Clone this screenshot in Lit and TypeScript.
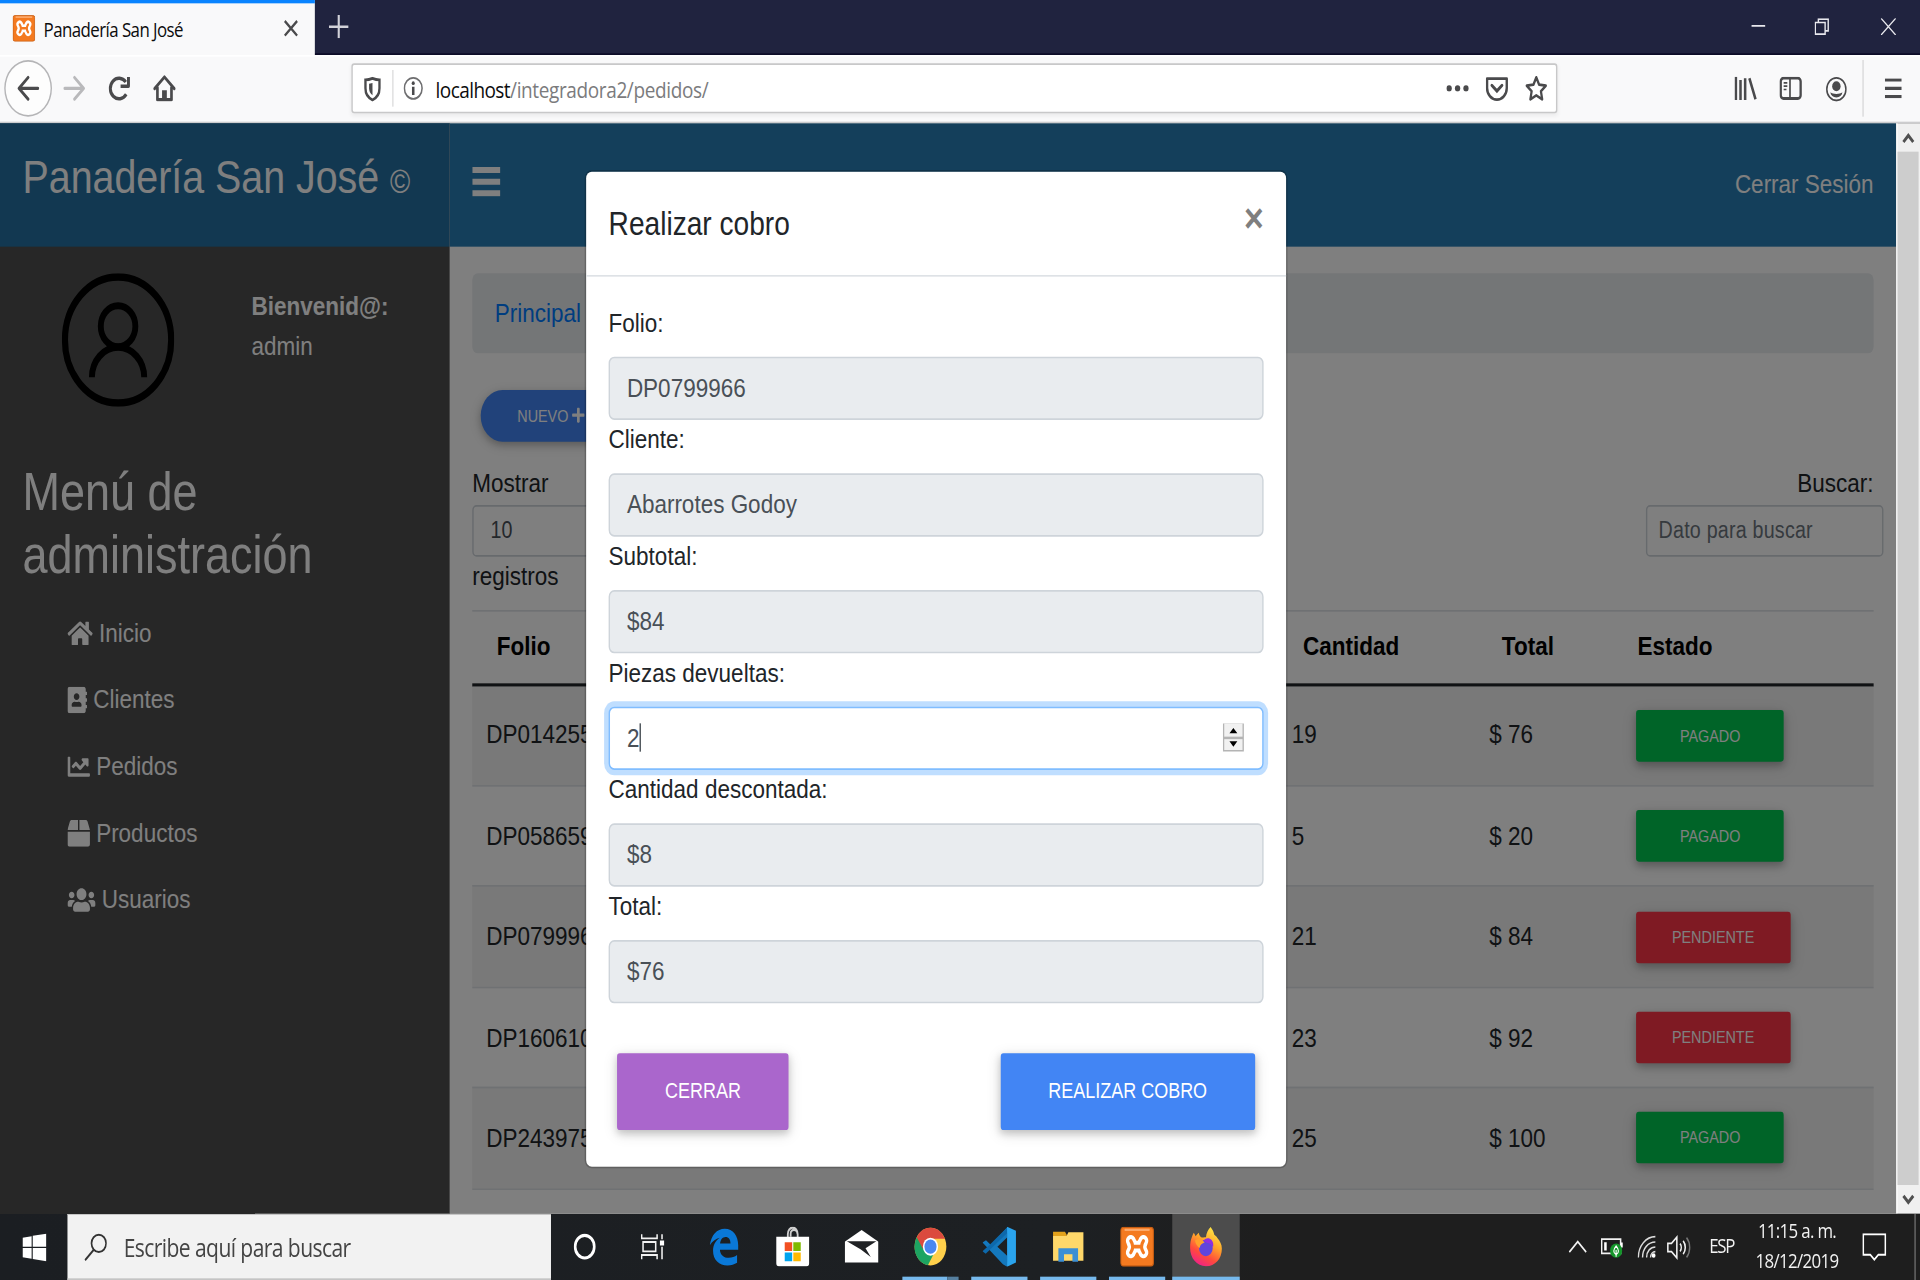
import { LitElement, html, css, svg, nothing } from "lit";
import { customElement, property } from "lit/decorators.js";

const xamppBone = "M7.500 8.500Q10.200 12 7.500 15.500M16.500 8.500Q13.800 12 16.500 15.500M9 12h6";
const xamppMark = svg`
  <rect x=".4" y=".4" width="23.2" height="23.2" rx="2" fill="#f47a20" stroke="#c65d13" stroke-width=".8"/>
  <rect x="3" y="1.2" width="18" height="1.4" rx=".6" fill="#fba869"/>
  <path d=${xamppBone} fill="none" stroke="#fff" stroke-width="7" stroke-linecap="round"/>
  <path d=${xamppBone} fill="none" stroke="#f47a20" stroke-width="2.200" stroke-linecap="round"/>`;

/* Solid glyphs of the site: viewBox width (height is 512) and outline. */
const SOLID: Record<string, [number, string]> = {
  home: [576, "M280.37 148.26L96 300.11V464a16 16 0 0 0 16 16l112.06-.29a16 16 0 0 0 15.92-16V368a16 16 0 0 1 16-16h64a16 16 0 0 1 16 16v95.64a16 16 0 0 0 16 16.05L464 480a16 16 0 0 0 16-16V300L295.67 148.26a12.19 12.19 0 0 0-15.3 0zM571.6 251.47L488 182.56V44.05a12 12 0 0 0-12-12h-56a12 12 0 0 0-12 12v72.61L318.47 43a48 48 0 0 0-61 0L4.34 251.47a12 12 0 0 0-1.6 16.9l25.5 31A12 12 0 0 0 45.15 301l235.22-193.74a12.19 12.19 0 0 1 15.3 0L530.9 301a12 12 0 0 0 16.9-1.6l25.5-31a12 12 0 0 0-1.7-16.93z"],
  book: [448, "M436 160c6.6 0 12-5.4 12-12v-40c0-6.6-5.4-12-12-12h-20V48c0-26.5-21.5-48-48-48H48C21.5 0 0 21.5 0 48v416c0 26.5 21.5 48 48 48h320c26.5 0 48-21.5 48-48v-48h20c6.6 0 12-5.4 12-12v-40c0-6.6-5.4-12-12-12h-20v-64h20c6.6 0 12-5.4 12-12v-40c0-6.6-5.4-12-12-12h-20v-64h20zm-228-32c35.3 0 64 28.7 64 64s-28.7 64-64 64-64-28.7-64-64 28.7-64 64-64zm112 236.8c0 10.6-10 19.2-22.4 19.2H118.4C106 384 96 375.4 96 364.8v-19.2c0-31.8 30.1-57.6 67.2-57.6h5c12.3 5.1 25.7 8 39.8 8s27.6-2.9 39.8-8h5c37.1 0 67.2 25.8 67.2 57.6v19.2z"],
  chart: [512, "M496 384H64V80c0-8.84-7.16-16-16-16H16C7.16 64 0 71.16 0 80v336c0 17.67 14.33 32 32 32h464c8.84 0 16-7.16 16-16v-32c0-8.84-7.16-16-16-16zM464 96H345.94c-21.38 0-32.09 25.85-16.97 40.97l32.4 32.4L288 242.75l-73.37-73.37c-12.5-12.5-32.76-12.5-45.25 0l-68.69 68.69c-6.25 6.25-6.25 16.38 0 22.63l22.62 22.62c6.25 6.25 16.38 6.25 22.63 0L192 237.25l73.37 73.37c12.5 12.5 32.76 12.5 45.25 0l96-96 32.4 32.4c15.12 15.12 40.97 4.41 40.97-16.97V112c.01-8.84-7.15-16-15.99-16z"],
  box: [512, "M509.5 184.6L458.9 32.8C452.4 13.2 434.1 0 413.4 0H272v192h238.700c-.4-2.500-.4-5-1.200-7.400zM240 0H98.600c-20.700 0-39 13.200-45.500 32.800L2.500 184.600c-.8 2.400-.8 4.900-1.200 7.400H240V0zM0 224v240c0 26.500 21.500 48 48 48h416c26.500 0 48-21.500 48-48V224H0z"],
  users: [640, "M96 224c35.3 0 64-28.7 64-64s-28.7-64-64-64-64 28.7-64 64 28.7 64 64 64zm448 0c35.3 0 64-28.7 64-64s-28.7-64-64-64-64 28.7-64 64 28.7 64 64 64zm32 32h-64c-17.6 0-33.5 7.1-45.1 18.6 40.3 22.1 68.9 62 75.1 109.4h66c17.7 0 32-14.3 32-32v-32c0-35.3-28.7-64-64-64zm-256 0c61.9 0 112-50.1 112-112S381.9 32 320 32 208 82.1 208 144s50.1 112 112 112zm76.8 32h-8.3c-20.8 10-43.9 16-68.5 16s-47.6-6-68.5-16h-8.3C179.6 288 128 339.6 128 403.2V432c0 26.5 21.5 48 48 48h288c26.5 0 48-21.5 48-48v-28.8c0-63.6-51.6-115.2-115.2-115.2zm-223.7-13.4C161.500 263.100 145.600 256 128 256H64c-35.300 0-64 28.700-64 64v32c0 17.700 14.300 32 32 32h65.900c6.300-47.400 34.900-87.300 75.200-109.400z"],
  plus: [448, "M416 208H272V64c0-17.67-14.33-32-32-32h-32c-17.67 0-32 14.33-32 32v144H32c-17.67 0-32 14.33-32 32v32c0 17.67 14.33 32 32 32h144v144c0 17.67 14.33 32 32 32h32c17.67 0 32-14.33 32-32V304h144c17.67 0 32-14.33 32-32v-32c0-17.670-14.330-32-32-32z"],
};

const solid = (name: string, size = 16) => {
  const [w, d] = SOLID[name];
  return html`<svg width=${(size * w) / 512} height=${size} viewBox="0 0 ${w} 512"><path fill="currentColor" d=${d}></path></svg>`;
};

const icon = (w: number, h: number, body: unknown, cls = "") =>
  html`<svg class=${cls} width=${w} height=${h} viewBox="0 0 ${w} ${h}" fill="none">${body}</svg>`;

/* ---------- Browser chrome ---------- */
@customElement("browser-chrome")
class BrowserChrome extends LitElement {
  static styles = css`
    :host { display: block; height: 74px; font-family: "Open Sans", "Noto Sans", sans-serif; }
    svg { display: block; flex: none; }
    .tabs { display: flex; height: 33px; background: #20233f; box-shadow: inset 0 -1px #0c0c28; }
    .tab { width: 224px; box-sizing: border-box; border-top: 2px solid #0a84ff; background: #f9f9fa; display: flex; align-items: center; padding: 0 12px 1px 9px; }
    .name { font-size: 12px; letter-spacing: -.4px; color: #0c0c0d; margin-left: 6px; flex: 1; white-space: nowrap; }
    .plus { margin: 9px 0 0 10px; }
    .win { margin-left: auto; display: flex; gap: 35.500px; padding: 11px 17.500px 0 0; }
    .nav { height: 41px; box-sizing: border-box; background: #f9f9fa; border-bottom: 1px solid #ccccce; display: flex; align-items: center; padding: 0 13px 1px 3px; border-top: 1px solid #fff; }
    .back { width: 34px; height: 34px; box-sizing: border-box; border: 1px solid #b5b5b7; border-radius: 50%; background: #fdfdfd; display: grid; place-items: center; }
    .url { width: 860px; height: 30px; box-sizing: border-box; border: 1px solid #c8c8c9; border-radius: 2px; background: #fff; margin-left: 125px; display: flex; align-items: center; padding: 0 6px 0 8px; box-shadow: 0 1px 3px rgba(0,0,0,.06); }
    .sep { width: 1px; height: 22px; background: #dededf; margin: 0 7px 0 8px; }
    .addr { margin-left: 9px; font-size: 13.500px; letter-spacing: -.26px; color: #7b7b7d; flex: 1; padding-top: 1px; }
    .host { color: #0c0c0d; letter-spacing: -.4px; }
    .fwd { margin-left: 8px; } .rel { margin-left: 16.500px; } .hom { margin-left: 15.500px; }
    .gap { margin-left: 12px; }
    .lib { margin-left: 126px; } .side { margin-left: 16px; } .acc { margin-left: 16.500px; }
    .bar { width: 1px; height: 34px; background: #dadadb; margin: 0 15px 0 11.500px; }
  `;
  render() {
    const k = "#4a4a4c";
    return html`
      <div class="tabs">
        <div class="tab">
          <svg width="16" height="16" viewBox="0 0 24 24">${xamppMark}</svg>
          <span class="name">Panadería San José</span>
          ${icon(10, 10, svg`<path d="M.6.6l8.800 8.800M9.400.6L.6 9.400" stroke="#4a4a4c" stroke-width="1.500"/>`)}
        </div>
        ${icon(14, 14, svg`<path d="M7 0v14M0 7h14" stroke="#d2d2d9" stroke-width="1.500"/>`, "plus")}
        <div class="win">
          ${icon(10, 10, svg`<path d="M0 4.500h10" stroke="#e8e8ee" stroke-width="1.100"/>`)}
          ${icon(11, 10, svg`<path d="M.5 2.500h7v7h-7zM2.700 2.500v-2h7v7H7.500" stroke="#e8e8ee"/>`)}
          ${icon(11, 10, svg`<path d="M.3 0l10.400 10M10.700 0L.3 10" stroke="#e8e8ee" stroke-width=".9"/>`)}
        </div>
      </div>
      <div class="nav">
        <div class="back">${icon(16, 16, svg`<path d="M15 8H1.800M8 1.500L1.500 8 8 14.500" stroke=${k} stroke-width="1.900" stroke-linecap="round" stroke-linejoin="round"/>`)}</div>
        ${icon(16, 16, svg`<path d="M1 8h13.200M8 1.500L14.500 8 8 14.500" stroke="#b9b9bb" stroke-width="1.900" stroke-linecap="round" stroke-linejoin="round"/>`, "fwd")}
        ${icon(16, 16, svg`<path d="M12.800 11.600A6.200 6.200 0 1 1 12.500 4.200M14.400 1.200v5.600H8.800" stroke=${k} stroke-width="2.100" stroke-linejoin="round"/>`, "rel")}
        ${icon(16, 16, svg`<path d="M1 8.200L8 1.200l7 7M3 7.500v7.300h10V7.500" stroke=${k} stroke-width="1.900" stroke-linejoin="round" stroke-linecap="round"/><path d="M6.300 14.500V9.200h3.400v5.300" fill=${k}/>`, "hom")}
        <div class="url">
          ${icon(12, 15, svg`<path d="M6 1C4 1.700 2.600 1.900 1 1.900V7c0 4 2.300 5.900 5 7 2.700-1.100 5-3 5-7V1.900C9.400 1.900 8 1.700 6 1z" stroke=${k} stroke-width="1.700"/><path d="M6 3.800v7.400C4.300 10.200 3.600 8.800 3.600 7V4.300z" fill=${k}/>`)}
          <div class="sep"></div>
          ${icon(14, 14, svg`<circle cx="7" cy="7" r="6.300" stroke="#6e6e70" stroke-width="1.100"/><circle cx="7" cy="3.900" r="1.100" fill=${k}/><path d="M7 6v5" stroke=${k} stroke-width="1.800"/>`)}
          <span class="addr"><span class="host">localhost</span>/integradora2/pedidos/</span>
          ${icon(16, 4, svg`<circle cx="2" cy="2" r="1.900" fill=${k}/><circle cx="8" cy="2" r="1.900" fill=${k}/><circle cx="14" cy="2" r="1.900" fill=${k}/>`)}
          ${icon(16, 15, svg`<path d="M1 1.200h14v5.600a7 7 0 0 1-14 0z" stroke=${k} stroke-width="1.700" stroke-linejoin="round"/><path d="M4.400 5.200L8 8.600l3.600-3.400" stroke=${k} stroke-width="1.900" stroke-linecap="round"/>`, "gap")}
          ${icon(16, 16, svg`<path d="M8 1.400l2 4.400 4.800.6-3.500 3.300.9 4.900L8 12.200l-4.200 2.400.9-4.900L1.200 6.400 6 5.800z" stroke=${k} stroke-width="1.600" stroke-linejoin="round"/>`, "gap")}
        </div>
        ${icon(16, 14, svg`<path d="M1 0v14M4.300 2v12M7.600 1v13M10.600 1l4.400 12.600" stroke=${k} stroke-width="1.800"/>`, "lib")}
        ${icon(16, 14, svg`<rect x=".9" y=".9" width="14.200" height="12.200" rx="2" stroke=${k} stroke-width="1.700"/><path d="M7.500 1v12" stroke=${k} stroke-width="1.200"/><path d="M3 3.700h2.600M3 5.700h2.600M3 7.700h2" stroke=${k} stroke-width="1"/>`, "side")}
        ${icon(15, 15, svg`<circle cx="7.500" cy="7.500" r="6.800" stroke=${k} stroke-width="1.100"/><circle cx="7.500" cy="5.700" r="3" fill=${k}/><path d="M3.200 9.400c1 .8 2.600 1 4.300 1s3.300-.2 4.300-1c-.3 2-2 3.100-4.300 3.100s-4-1.100-4.300-3.100z" fill=${k}/>`, "acc")}
        <div class="bar"></div>
        ${icon(12, 12, svg`<path d="M0 1h12M0 6h12M0 11h12" stroke=${k} stroke-width="1.900"/>`)}
      </div>`;
  }
}

/* ---------- Side menu ---------- */
@customElement("side-menu")
class SideMenu extends LitElement {
  static styles = css`
    :host { display: block; width: 320px; flex: none; background: #4e4e4e; color: #fff; }
    .brand { height: 74px; background: #2470a2; box-sizing: border-box; padding: 11.500px 16px 0; font-size: 28px; line-height: 1.500; white-space: nowrap; }
    .copy { font-size: 19.500px; }
    .user { display: flex; padding: 16px 0 0 44px; height: 111.500px; }
    .who { margin-left: 55px; padding-top: 7.900px; line-height: 24px; }
    .title { font-size: 32px; line-height: 38.400px; font-weight: 400; margin: 0 16px 7.500px; }
    .list { list-style: none; margin: 0; padding: 0 0 0 48px; }
    .item { height: 40px; display: flex; align-items: center; gap: 4.400px; }
    svg { display: block; }
  `;
  render() {
    const items = [["home", "Inicio"], ["book", "Clientes"], ["chart", "Pedidos"], ["box", "Productos"], ["users", "Usuarios"]];
    return html`
      <div class="brand">Panadería San José <span class="copy">©</span></div>
      <div class="user">
        ${icon(80, 80, svg`<circle cx="40" cy="40" r="37.800" stroke="#000" stroke-width="4.400"/><circle cx="40" cy="31.700" r="12.300" stroke="#000" stroke-width="4.200"/><path d="M21.400 62.400A18.600 18 0 0 1 58.600 62.400" stroke="#000" stroke-width="4.200"/>`)}
        <div class="who"><b>Bienvenid@:</b><br>admin</div>
      </div>
      <h2 class="title">Menú de administración</h2>
      <ul class="list">${items.map(([i, t]) => html`<li class="item">${solid(i)}<span>${t}</span></li>`)}</ul>`;
  }
}

/* ---------- Orders page ---------- */
const ORDERS = [
  ["DP014255", "19", "$ 76", true],
  ["DP058659", "5", "$ 20", true],
  ["DP079996", "21", "$ 84", false],
  ["DP160610", "23", "$ 92", false],
  ["DP243975", "25", "$ 100", true],
] as const;

@customElement("orders-page")
class OrdersPage extends LitElement {
  static styles = css`
    :host { display: flex; flex-direction: column; flex: 1; min-width: 0; background: #fff; color: #212529; overflow: hidden; }
    svg { display: block; }
    .top { height: 74px; flex: none; background: #287eb6; display: flex; align-items: center; justify-content: space-between; padding: 0 16px; color: #fff; box-sizing: border-box; }
    .bars { margin-bottom: 4px; }
    .main { padding: 16px 16px 0; }
    .crumb { height: 48px; border-radius: 4px; background: #e9ecef; display: flex; align-items: center; padding: 0 16px 1px; box-sizing: border-box; color: #007bff; }
    .btn { display: inline-flex; align-items: center; height: 31px; border-radius: 2px; font-size: 10.240px; color: #fff; box-sizing: border-box; box-shadow: 0 2px 5px rgba(0,0,0,.2), 0 2px 10px rgba(0,0,0,.14); }
    .new { background: #4285f4; border-radius: 99px; padding: 0 26px; margin: 21.600px 6px 0; gap: 3px; }
    .ok { background: #00c851; padding: 0 31.200px; }
    .due { background: #ff3547; padding: 0 25.500px; }
    .filters { display: flex; justify-content: space-between; line-height: 24px; margin-top: 13px; height: 88px; }
    .len { width: 120px; }
    .small { height: 31px; box-sizing: border-box; border: 1px solid #ced4da; border-radius: 3px; font-size: 14px; line-height: 29px; margin-top: 1px; color: #495057; }
    .sel { padding-left: 12px; }
    .find { width: 169px; margin-right: -7px; color: #6c757d; padding-left: 8px; letter-spacing: .15px; }
    .lbl { text-align: right; }
    .row { display: grid; grid-template-columns: 572px 139px 105px 181px; align-items: center; height: 60.400px; box-sizing: border-box; border-top: 1px solid #dee2e6; }
    .row:nth-child(even) { background: #f2f2f2; }
    .head { height: 46px; font-weight: 700; color: #000; border-bottom: 2px solid #212529; padding-bottom: 1px; }
    .head + .row { border-top: 0; height: 59.500px; }
    .a { padding-left: 10px; } .b { padding-left: 11px; } .c { padding-left: 12.500px; } .d { padding-left: 12px; display: flex; }
    .head .a { padding-left: 17.500px; } .head .b { padding-left: 19px; } .head .c { padding-left: 21.500px; } .head .d { padding: 0 0 0 13px; }
  `;
  render() {
    return html`
      <div class="top">
        ${icon(20, 18, svg`<path d="M0 2h20M0 9h20M0 16h20" stroke="#fff" stroke-width="3.600"/>`, "bars")}
        <span>Cerrar Sesión</span>
      </div>
      <div class="main">
        <div class="crumb">Principal</div>
        <div class="btn new">NUEVO ${solid("plus", 10.24)}</div>
        <div class="filters">
          <div class="len">Mostrar<div class="small sel">10</div>registros</div>
          <div><div class="lbl">Buscar:</div><div class="small find">Dato para buscar</div></div>
        </div>
        <div>
          <div class="row head"><span class="a">Folio</span><span class="b">Cantidad</span><span class="c">Total</span><span class="d">Estado</span></div>
          ${ORDERS.map(([f, q, t, paid]) => html`<div class="row">
            <span class="a">${f}</span><span class="b">${q}</span><span class="c">${t}</span>
            <span class="d"><span class="btn ${paid ? "ok" : "due"}">${paid ? "PAGADO" : "PENDIENTE"}</span></span></div>`)}
          <div class="row"></div>
        </div>
      </div>`;
  }
}

/* ---------- Payment dialog ---------- */
@customElement("pay-dialog")
class PayDialog extends LitElement {
  static styles = css`
    :host { display: block; width: 500px; height: 599px; box-sizing: border-box; border: 1px solid rgba(0,0,0,.2); border-radius: 5px; background: #fff; background-clip: padding-box; color: #212529; }
    .head { display: flex; justify-content: space-between; height: 62.700px; box-sizing: border-box; padding: 15.700px 16px; border-bottom: 1px solid #dee2e6; font-size: 20px; line-height: 30px; }
    .x { font-size: 24px; line-height: 24px; font-weight: 700; color: #7f7f7f; }
    .body { padding: 16px 16px 0; }
    .label { line-height: 24px; margin-bottom: 8px; }
    .input { height: 38px; box-sizing: border-box; border: 1px solid #ced4da; border-radius: 4px; background: #e9ecef; padding: 0 13px 0 12px; color: #495057; display: flex; align-items: center; }
    .focus { background: #fff; border-color: #80bdff; box-shadow: 0 0 0 3.200px rgba(0,123,255,.25); }
    .caret { width: 1px; height: 17px; background: #495057; }
    .spin { margin-left: auto; display: block; }
    .foot { display: flex; justify-content: space-between; padding: 30px 22px 0; }
    .btn { height: 46px; box-sizing: border-box; display: flex; align-items: center; padding: 0 34.200px 1px; border-radius: 2px; font-size: 12.800px; color: #fff; box-shadow: 0 2px 5px rgba(0,0,0,.16), 0 2px 10px rgba(0,0,0,.12); }
    .close { background: #aa66cc; } .pay { background: #4285f4; }
  `;
  render() {
    const fields: [string, string, boolean?][] = [
      ["Folio:", "DP0799966"], ["Cliente:", "Abarrotes Godoy"], ["Subtotal:", "$84"],
      ["Piezas devueltas:", "2", true], ["Cantidad descontada:", "$8"], ["Total:", "$76"],
    ];
    return html`
      <div class="head"><span>Realizar cobro</span><span class="x">×</span></div>
      <div class="body">${fields.map(([l, v, on]) => html`
        <div class="label">${l}</div>
        <div class="input ${on ? "focus" : ""}">${v}${on ? html`<span class="caret"></span>
          <svg class="spin" width="15" height="17" viewBox="0 0 15 17"><rect width="15" height="17" fill="#b4b4b4"/><rect x="1" y="0" width="13" height="8" fill="#f1f1f1"/><rect x="1" y="9.500" width="13" height="6.500" fill="#f1f1f1"/><path d="M7.500 2.800l2.800 3.200H4.700zM7.500 14l2.800-3.200H4.700z" fill="#000"/></svg>` : nothing}</div>`)}
      </div>
      <div class="foot"><div class="btn close">CERRAR</div><div class="btn pay">REALIZAR COBRO</div></div>`;
  }
}

/* ---------- Desktop taskbar ---------- */
@customElement("task-pin")
class TaskPin extends LitElement {
  @property() kind = "";
  @property() state = "";
  static styles = css`
    :host { display: block; }
    .pin { width: 49px; height: 40px; box-sizing: border-box; position: relative; display: grid; place-items: center; }
    .active { background: #4c4c4c; margin-left: 1px; width: 48px; }
    .line { position: absolute; left: 5px; right: 4px; bottom: 0; height: 2px; background: #76b9ed; }
    .active .line { left: 0; right: 0; }
    .multi { right: 12px; }
    .rest { left: 37px; background: #557f9f; }
    svg { display: block; }
  `;
  private art() {
    switch (this.kind) {
      case "edge": return svg`<path d="M2 11.200C3 5 7 1.200 12.600 1.200c6 0 9.600 4.300 9.600 10v2.600H9.200c.2 3.200 2.900 4.900 6.200 4.900 2.400 0 4.400-.7 6-1.700v4.700c-1.800 1-4.300 1.600-6.800 1.600C8.600 23.300 4.300 20 4.300 14.500c0-3.400 1.700-6.200 4.800-7.900C6.200 7.200 3.700 8.700 2 11.200zm7.300-1.100h7.400c0-2.300-1.200-3.900-3.500-3.900-2.200 0-3.600 1.700-3.900 3.900z" fill="#0a78d7"/>`;
      case "store": return svg`<path d="M8.500 6.500V4.500a3.500 3.900 0 0 1 7 0v2M10.500 6V4.200c0-3 4.800-3 4.800 0" stroke="#cfcfcf" stroke-width="1.300" fill="none"/><path d="M.3 6h23.400v16a1.800 1.800 0 0 1-1.800 1.800H2.100A1.800 1.800 0 0 1 .3 22z" fill="#fff"/><path d="M6.300 9.400h5.300v5.200H6.300z" fill="#f25022"/><path d="M12.400 9.400h5.300v5.200h-5.300z" fill="#7fba00"/><path d="M6.300 15.500h5.300v5.200H6.300z" fill="#00a4ef"/><path d="M12.400 15.500h5.300v5.200h-5.300z" fill="#ffb900"/>`;
      case "mail": return svg`<path d="M0 9L12 2l12 7v12.500H0z" fill="#fff"/><path d="M1.500 8.800h21L14.800 13l3.700 5.200-7-4.500z" fill="#202225"/>`;
      case "chrome": return svg`<circle cx="12" cy="12" r="11.300" fill="#ffd04b"/><path d="M12 12L2.200 6.300A11.300 11.300 0 0 0 10.200 23.200L14.500 16z" fill="#1da462"/><path d="M2.200 6.300a11.300 11.300 0 0 1 19.600 0l.6 1H12l-5.400 6z" fill="#db4a3e"/><circle cx="12" cy="12" r="5.400" fill="#fff"/><circle cx="12" cy="12" r="4.300" fill="#4a87f0"/>`;
      case "code": return svg`<path d="M17.500.5L6 11 2.500 8.200 0 9.500l14.500 13L17.500 24V17.500L10.600 12l6.900-5.500z" fill="#1478bd"/><path d="M0 14.800l2.300 1.500L18 3.500V0L5.500 10.500z" fill="#0d68ab"/><path d="M17.500 0L23.800 2.500v19L17.500 24z" fill="#2aa4ee"/>`;
      case "files": return svg`<path d="M1.200 3h8.500l1.300 2v3H1.200z" fill="#e3a21b"/><path d="M1.200 5.600h9.600l1.300-2.200h10.700V20.500H1.200z" fill="#ffd86a"/><path d="M5 13h14v8h-4v-4.500H9V21H5z" fill="#3c8fd4"/>`;
      case "xampp": return xamppMark;
      default: return svg`
        <defs><linearGradient id="fx" x1=".8" y1="0" x2=".3" y2="1"><stop offset="0" stop-color="#fff04a"/><stop offset=".4" stop-color="#ffa62a"/><stop offset=".72" stop-color="#ff4a3c"/><stop offset="1" stop-color="#f0208a"/></linearGradient></defs>
        <path d="M15.300.2c1.600 1.800 2.300 3.200 2.600 4.600 1 .6 1.600 1 2.100 1.800 2 2.200 3.300 3.800 3.300 6.600C23.300 19.200 18.500 23.700 12 23.700S.7 19 .7 12.700c0-2.800.5-4.800 1.100-6 .5-1.200.9-2.200 1.500-3 .6.6 1 1.300 1.300 2.100C5.200 5 5.900 4.300 6.900 3.700c.2 1.200.7 2 1.600 2.600 1.300.4 2.700.1 3.500.1.200-2.500 1.600-4.700 3.300-6.200z" fill="url(#fx)"/>
        <circle cx="11.900" cy="12.800" r="4.900" fill="#5f45dc"/><path d="M10.200 8.400c1.300-1.700 4-2.100 5.800-.4 1.300 1.300 1.400 3 1 4.300-1-1.500-2.300-2.400-4.200-2.500z" fill="#8f2fe0"/><path d="M4.200 8.300c2-1.200 4.800-1 6.800 1.200-1.600.4-3.200 1.300-3.500 3.300C5.900 12 4.600 10.400 4.200 8.300z" fill="#ffa12b"/>`;
    }
  }
  render() {
    const s = this.state;
    return html`<div class="pin ${s === "active" ? "active" : ""}">
      <svg width="24" height="24" viewBox="0 0 24 24">${this.art()}</svg>
      ${s ? html`<span class="line ${s === "multi" ? "multi" : ""}"></span>` : nothing}
      ${s === "multi" ? html`<span class="line rest"></span>` : nothing}
    </div>`;
  }
}

@customElement("task-bar")
class TaskBar extends LitElement {
  static styles = css`
    :host { display: flex; height: 40px; background: linear-gradient(90deg, #1b1e22, #1d2023 55%, #1e1e1e 66%); color: #f2f2f2; font-family: "Open Sans", "Noto Sans", sans-serif; }
    svg { display: block; flex: none; }
    .cell { width: 48px; display: grid; place-items: center; }
    .search { width: 344px; box-sizing: border-box; background: #f2f2f2; border-top: 1px solid #c6c6c6; border-bottom: 1px solid #c4c4c4; display: flex; align-items: center; padding-left: 12px; color: #444; font-size: 15px; letter-spacing: -.42px; }
    .hint { margin-left: 12px; }
    .pins { display: flex; margin-left: 2px; }
    .tray { margin-left: auto; display: flex; align-items: center; font-size: 12px; letter-spacing: -.33px; }
    .lang { margin-left: 12px; width: 18px; letter-spacing: -.9px; padding-bottom: 2px; }
    .clock { width: 60px; margin-left: 14.500px; text-align: center; line-height: 18px; letter-spacing: -.48px; white-space: nowrap; padding-bottom: 1px; }
    .bat { margin-left: 10.500px; } .wifi { margin-left: 10px; } .vol { margin-left: 8px; }
    .note { margin-left: 16.500px; }
    .edge { width: 1px; height: 40px; background: #6a6a6a; margin: 0 3.500px 0 19.500px; }
  `;
  render() {
    const w = "#f2f2f2";
    const pins = [["edge", ""], ["store", ""], ["mail", ""], ["chrome", "multi"], ["code", "open"], ["files", "open"], ["xampp", "open"], ["firefox", "active"]];
    return html`
      <div class="cell">${icon(17, 17, svg`<path d="M0 2.600L6.500 1.700V8H0zM7.300 1.500L17 .2V8H7.300zM0 8.800h6.500v6.400L0 14.300zM7.300 8.800H17v8L7.300 15.400z" fill="#fff"/>`)}</div>
      <div class="search">
        ${icon(16, 17, svg`<circle cx="10.300" cy="6" r="5.200" stroke="#333" stroke-width="1.200"/><path d="M6.700 9.800L.5 16.200" stroke="#333" stroke-width="1.300"/>`)}
        <span class="hint">Escribe aquí para buscar</span>
      </div>
      <div class="cell">${icon(16, 16, svg`<circle cx="8" cy="8" r="6.800" stroke="#fff" stroke-width="1.900"/>`)}</div>
      <div class="cell">${icon(17, 16, svg`<path d="M.5.500v2.500h11V.5M.5 15.500V13h11v2.500M1.500 5.200h9v5.600h-9zM15 .5v3M15 8v7.500" stroke=${w} stroke-width="1.100"/><path d="M13.500 4.300h3v3h-3z" fill="#fff"/>`)}</div>
      <div class="pins">${pins.map(([k, s]) => html`<task-pin .kind=${k} .state=${s}></task-pin>`)}</div>
      <div class="tray">
        ${icon(13, 8, svg`<path d="M.5 7.300l6-6.300 6 6.300" stroke=${w} stroke-width="1.200"/>`)}
        ${icon(16, 14, svg`<path d="M.5 2.500h13.500v8.500H.5z" stroke=${w} stroke-width="1.100"/><path d="M14 4.500h1.500v3H14M2.300 4.300h1.800v5H2.300z" fill="#fff"/><circle cx="10.800" cy="9.400" r="4.300" fill="#14962a"/><path d="M10.800 6.600c2.200 2.300 2.200 4 0 5.200-2.200-1.200-2.200-2.900 0-5.200zM10.800 9v4" stroke="#fff" stroke-width=".8"/>`, "bat")}
        ${icon(13, 14, svg`<path d="M.6 13.500C.6 6.500 6 1 12.800 1M3.600 13.500c0-5.400 4-9.300 9.200-9.300M6.500 13.500c0-3.700 2.700-6.300 6.300-6.300M9.300 13.500c0-2 1.500-3.500 3.500-3.500" stroke="#dcdcdc" stroke-width="1"/><circle cx="11.500" cy="12.300" r="1.400" fill="#fff"/>`, "wifi")}
        ${icon(18, 15, svg`<path d="M.6 5h2.600L7 1.300v12.400L3.200 10H.6z" stroke=${w} stroke-width="1.100"/><path d="M9.300 5.200c1.100 1.300 1.100 3.300 0 4.600M11.500 3.500c2 2.200 2 5.800 0 8" stroke=${w} stroke-width="1.100"/><path d="M13.900 1.600c3 3.300 3 8.500 0 11.800" stroke="#777"/>`, "vol")}
        <span class="lang">ESP</span>
        <div class="clock">11:15 a. m.<br>18/12/2019</div>
        ${icon(17, 17, svg`<path d="M.6.6h15.800v12.200h-5l-2.900 3-2.900-3h-5z" stroke="#fff" stroke-width="1.200"/>`, "note")}
        <div class="edge"></div>
      </div>`;
  }
}

/* ---------- Whole desktop: a 1366x768 screen stretched over the 1920x1280 window ---------- */
@customElement("app-root")
class AppRoot extends LitElement {
  static styles = css`
    :host { display: block; width: 1920px; height: 1280px; overflow: hidden; }
    .screen { width: 1366px; height: 768px; transform: scale(1.405564, 1.666667); transform-origin: 0 0; font-family: "Liberation Sans", Arial, sans-serif; font-size: 16px; }
    .page { height: 654px; display: flex; position: relative; overflow: hidden; }
    .scroll { width: 17px; background: #f0f0f0; box-sizing: border-box; border-left: 1px solid #fff; display: flex; flex-direction: column; align-items: center; justify-content: space-between; }
    .thumb { flex: 1; width: 15px; background: #cdcdcd; align-self: flex-start; }
    .arrow { display: block; height: 17px; width: 16px; }
    .shade { position: absolute; inset: 0 17px 0 0; background: rgba(0,0,0,.5); display: flex; justify-content: center; align-items: flex-start; padding: 28px 17px 0 0; }
  `;
  render() {
    return html`<div class="screen">
      <browser-chrome></browser-chrome>
      <div class="page">
        <side-menu></side-menu>
        <orders-page></orders-page>
        <div class="scroll">
          <svg class="arrow" viewBox="0 0 16 17"><path d="M4.200 11.200L7.700 7.300l3.500 3.900" stroke="#505050" stroke-width="2" fill="none"/></svg>
          <div class="thumb"></div>
          <svg class="arrow" viewBox="0 0 16 17"><path d="M4.200 6.500l3.500 3.900 3.500-3.900" stroke="#505050" stroke-width="2" fill="none"/></svg>
        </div>
        <div class="shade"><pay-dialog></pay-dialog></div>
      </div>
      <task-bar></task-bar>
    </div>`;
  }
}
